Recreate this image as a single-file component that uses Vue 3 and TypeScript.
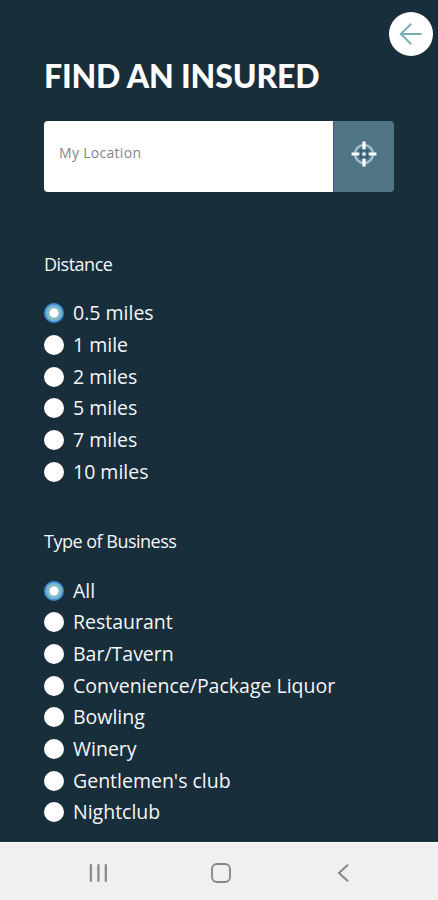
<script setup lang="ts">
import { ref } from 'vue'

interface Group {
  name: string
  title: string
  options: string[]
}

const groups: Group[] = [
  {
    name: 'distance',
    title: 'Distance',
    options: ['0.5 miles', '1 mile', '2 miles', '5 miles', '7 miles', '10 miles'],
  },
  {
    name: 'business',
    title: 'Type of Business',
    options: [
      'All',
      'Restaurant',
      'Bar/Tavern',
      'Convenience/Package Liquor',
      'Bowling',
      'Winery',
      "Gentlemen's club",
      'Nightclub',
    ],
  },
]

const selected = ref<Record<string, string>>({ distance: '0.5 miles', business: 'All' })
const location = ref('')
</script>

<template>
  <div class="screen">
    <main class="content">
      <header class="top">
        <button class="back" type="button" aria-label="Back">
          <svg width="24" height="24" viewBox="0 0 24 24" fill="none">
            <path d="M12.2 1.8 1.8 12l10.4 10.2M2 12h20.6" stroke="#76afb7" stroke-width="2" />
          </svg>
        </button>
      </header>

      <h1 class="title">FIND AN INSURED</h1>

      <div class="search">
        <input v-model="location" class="field" type="text" placeholder="My Location" />
        <button class="locate" type="button" aria-label="Use my location">
          <svg width="26" height="26" viewBox="0 0 26 26" fill="none">
            <circle cx="13" cy="13" r="9" stroke="#a3bccd" stroke-width="2.6" />
            <circle cx="13" cy="13" r="4.4" stroke="#315e72" stroke-width="2.4" />
            <circle cx="13" cy="13" r="1.8" fill="#e8f4fa" />
            <path
              d="M13 .6v7.8M13 17.6v7.8M.6 13h7.8M17.6 13h7.8"
              stroke="#fff"
              stroke-width="3.2"
            />
          </svg>
        </button>
      </div>

      <section v-for="group in groups" :key="group.name" class="group">
        <h2 class="heading">{{ group.title }}</h2>
        <label v-for="option in group.options" :key="option" class="option">
          <input
            v-model="selected[group.name]"
            class="radio"
            type="radio"
            :name="group.name"
            :value="option"
          />
          <span class="label">{{ option }}</span>
        </label>
      </section>
    </main>

    <nav class="navbar">
      <svg width="24" height="24" viewBox="0 0 24 24" fill="none">
        <path d="M4.9 3.2v17.6M12.4 3.2v17.6M19.8 3.2v17.6" stroke="#8a8a8a" stroke-width="2.3" />
      </svg>
      <svg width="24" height="24" viewBox="0 0 24 24" fill="none">
        <rect x="3" y="3" width="18" height="18" rx="5" stroke="#858585" stroke-width="1.8" />
      </svg>
      <svg width="24" height="24" viewBox="0 0 24 24" fill="none">
        <path d="M17 3.8 8 12l9 8.2" stroke="#858585" stroke-width="2" />
      </svg>
    </nav>
  </div>
</template>

<style>
body {
  margin: 0;
}
</style>

<style scoped>
.screen {
  display: flex;
  flex-direction: column;
  width: 100%;
  height: 900px;
  overflow: hidden;
  background: #192e3b;
  color: #f4f6f7;
  font-family: 'Open Sans', 'Noto Sans', sans-serif;
}

.content {
  flex: 1;
  padding: 0 44px;
}

.top {
  display: flex;
  justify-content: flex-end;
  height: 56px;
  margin-right: -39px;
  padding-top: 12px;
  box-sizing: border-box;
}

.back {
  display: grid;
  place-items: center;
  width: 44px;
  height: 44px;
  padding: 0;
  border: 0;
  border-radius: 50%;
  background: #fff;
}

.title {
  margin: 0;
  height: 65px;
  font-family: Lato, 'Open Sans', sans-serif;
  font-size: 32px;
  line-height: 40px;
  font-weight: 900;
  letter-spacing: -0.15px;
  color: #fff;
  white-space: nowrap;
}

.search {
  display: flex;
  height: 71px;
  border-radius: 4px;
  overflow: hidden;
}

.field {
  flex: 1;
  min-width: 0;
  padding: 0 15px 9px;
  border: 0;
  outline: 0;
  background: #fff;
  color: #444;
  font: 14px 'Open Sans', sans-serif;
  letter-spacing: 0.3px;
}

.field::placeholder {
  color: #858585;
  opacity: 1;
}

.locate {
  display: grid;
  place-items: center;
  width: 61px;
  padding: 0 1px 5px 0;
  border: 0;
  border-left: 1px solid #2f6680;
  background: #507585;
}

.group {
  padding-top: 60px;
}

.group + .group {
  padding-top: 42px;
}

.heading {
  margin: 0;
  height: 45.5px;
  font-size: 18px;
  line-height: 25px;
  font-weight: 400;
  letter-spacing: -0.5px;
}

.option {
  display: flex;
  align-items: center;
  gap: 9px;
  height: 31.66px;
}

.radio {
  flex: none;
  appearance: none;
  width: 20px;
  height: 20px;
  margin: 0;
  border-radius: 50%;
  background: #fff;
}

.radio:checked {
  border: 2px solid #3f91dc;
  background: radial-gradient(circle, #fff 4px, #83b9c4 5.2px);
}

.label {
  font-size: 19.5px;
  line-height: 28px;
  white-space: nowrap;
}

.navbar {
  display: flex;
  justify-content: space-between;
  align-items: center;
  height: 58px;
  padding: 2px 83px 0 86px;
  box-sizing: border-box;
  border-top: 1px solid #fff;
  background: #f0f0f0;
}
</style>
